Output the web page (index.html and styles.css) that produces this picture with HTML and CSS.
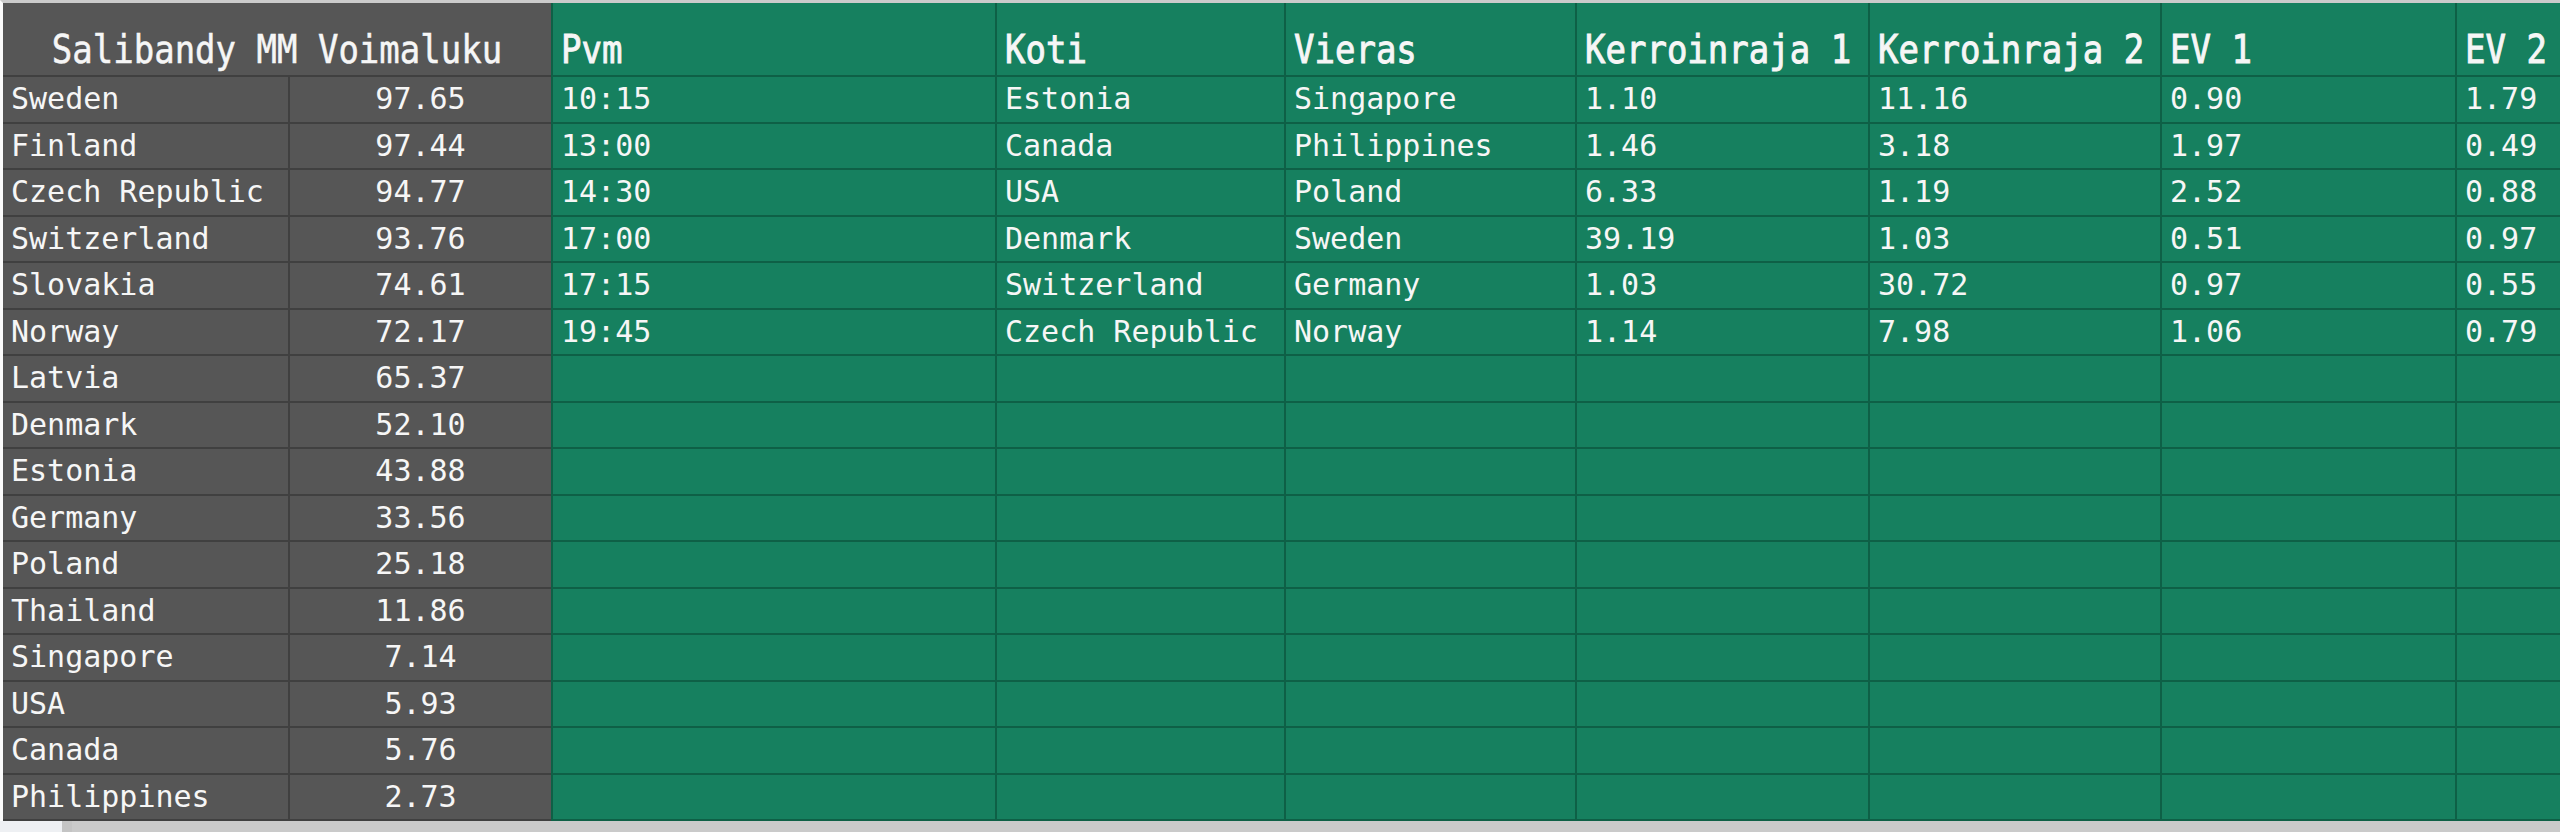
FILE: index.html
```html
<!DOCTYPE html>
<html lang="fi">
<head>
<meta charset="utf-8">
<title>Salibandy MM Voimaluku</title>
<link rel="stylesheet" href="styles.css">
</head>
<body>
<div class="sheet">
  <div class="cell grey head span2"><span class="ht">Salibandy MM Voimaluku</span></div>
  <div class="cell green head first"><span class="ht">Pvm</span></div>
  <div class="cell green head"><span class="ht">Koti</span></div>
  <div class="cell green head"><span class="ht">Vieras</span></div>
  <div class="cell green head"><span class="ht">Kerroinraja 1</span></div>
  <div class="cell green head"><span class="ht">Kerroinraja 2</span></div>
  <div class="cell green head"><span class="ht">EV 1</span></div>
  <div class="cell green head"><span class="ht">EV 2</span></div>

  <div class="cell grey name">Sweden</div><div class="cell grey val">97.65</div>
  <div class="cell green first">10:15</div><div class="cell green">Estonia</div><div class="cell green">Singapore</div><div class="cell green">1.10</div><div class="cell green">11.16</div><div class="cell green">0.90</div><div class="cell green">1.79</div>

  <div class="cell grey name">Finland</div><div class="cell grey val">97.44</div>
  <div class="cell green first">13:00</div><div class="cell green">Canada</div><div class="cell green">Philippines</div><div class="cell green">1.46</div><div class="cell green">3.18</div><div class="cell green">1.97</div><div class="cell green">0.49</div>

  <div class="cell grey name">Czech Republic</div><div class="cell grey val">94.77</div>
  <div class="cell green first">14:30</div><div class="cell green">USA</div><div class="cell green">Poland</div><div class="cell green">6.33</div><div class="cell green">1.19</div><div class="cell green">2.52</div><div class="cell green">0.88</div>

  <div class="cell grey name">Switzerland</div><div class="cell grey val">93.76</div>
  <div class="cell green first">17:00</div><div class="cell green">Denmark</div><div class="cell green">Sweden</div><div class="cell green">39.19</div><div class="cell green">1.03</div><div class="cell green">0.51</div><div class="cell green">0.97</div>

  <div class="cell grey name">Slovakia</div><div class="cell grey val">74.61</div>
  <div class="cell green first">17:15</div><div class="cell green">Switzerland</div><div class="cell green">Germany</div><div class="cell green">1.03</div><div class="cell green">30.72</div><div class="cell green">0.97</div><div class="cell green">0.55</div>

  <div class="cell grey name">Norway</div><div class="cell grey val">72.17</div>
  <div class="cell green first">19:45</div><div class="cell green">Czech Republic</div><div class="cell green">Norway</div><div class="cell green">1.14</div><div class="cell green">7.98</div><div class="cell green">1.06</div><div class="cell green">0.79</div>

  <div class="cell grey name">Latvia</div><div class="cell grey val">65.37</div>
  <div class="cell green first"></div><div class="cell green"></div><div class="cell green"></div><div class="cell green"></div><div class="cell green"></div><div class="cell green"></div><div class="cell green"></div>

  <div class="cell grey name">Denmark</div><div class="cell grey val">52.10</div>
  <div class="cell green first"></div><div class="cell green"></div><div class="cell green"></div><div class="cell green"></div><div class="cell green"></div><div class="cell green"></div><div class="cell green"></div>

  <div class="cell grey name">Estonia</div><div class="cell grey val">43.88</div>
  <div class="cell green first"></div><div class="cell green"></div><div class="cell green"></div><div class="cell green"></div><div class="cell green"></div><div class="cell green"></div><div class="cell green"></div>

  <div class="cell grey name">Germany</div><div class="cell grey val">33.56</div>
  <div class="cell green first"></div><div class="cell green"></div><div class="cell green"></div><div class="cell green"></div><div class="cell green"></div><div class="cell green"></div><div class="cell green"></div>

  <div class="cell grey name">Poland</div><div class="cell grey val">25.18</div>
  <div class="cell green first"></div><div class="cell green"></div><div class="cell green"></div><div class="cell green"></div><div class="cell green"></div><div class="cell green"></div><div class="cell green"></div>

  <div class="cell grey name">Thailand</div><div class="cell grey val">11.86</div>
  <div class="cell green first"></div><div class="cell green"></div><div class="cell green"></div><div class="cell green"></div><div class="cell green"></div><div class="cell green"></div><div class="cell green"></div>

  <div class="cell grey name">Singapore</div><div class="cell grey val">7.14</div>
  <div class="cell green first"></div><div class="cell green"></div><div class="cell green"></div><div class="cell green"></div><div class="cell green"></div><div class="cell green"></div><div class="cell green"></div>

  <div class="cell grey name">USA</div><div class="cell grey val">5.93</div>
  <div class="cell green first"></div><div class="cell green"></div><div class="cell green"></div><div class="cell green"></div><div class="cell green"></div><div class="cell green"></div><div class="cell green"></div>

  <div class="cell grey name">Canada</div><div class="cell grey val">5.76</div>
  <div class="cell green first"></div><div class="cell green"></div><div class="cell green"></div><div class="cell green"></div><div class="cell green"></div><div class="cell green"></div><div class="cell green"></div>

  <div class="cell grey name">Philippines</div><div class="cell grey val">2.73</div>
  <div class="cell green first"></div><div class="cell green"></div><div class="cell green"></div><div class="cell green"></div><div class="cell green"></div><div class="cell green"></div><div class="cell green"></div>
</div>
<div class="foot">
  <div class="foot-a"></div>
  <div class="foot-b"></div>
</div>
</body>
</html>
```

FILE: styles.css
```css
html, body {
  margin: 0;
  padding: 0;
}

body {
  width: 2560px;
  height: 832px;
  overflow: hidden;
  background: #c9c9c9;
  font-family: "DejaVu Sans Mono", "Liberation Mono", monospace;
  color: #f6f6f6;
}

.sheet {
  display: grid;
  grid-template-columns: 285px 263px 444px 289px 291px 293px 292px 295px 105px;
  grid-template-rows: 74px repeat(16, 46.5px);
  width: max-content;
  border-top: 3px solid #cbcbcb;
  border-left: 3px solid #fbfbfb;
}

.cell {
  box-sizing: border-box;
  border-bottom: 2px solid;
  border-left: 2px solid;
  padding-left: 8px;
  font-size: 30px;
  line-height: 44.5px;
  white-space: nowrap;
  overflow: hidden;
}

.grey {
  background: #565656;
  border-color: #404040;
}

.green {
  background: #16805f;
  border-color: #0e6046;
}

.name {
  border-left-width: 0;
}

.val {
  text-align: center;
  padding-left: 0;
}

.head {
  padding-top: 28px;
  line-height: 40px;
  font-size: 34px;
}

.span2 {
  grid-column: span 2;
  border-left-width: 0;
  text-align: center;
  padding-left: 0;
}

.ht {
  display: inline-block;
  transform: scaleY(1.15);
  transform-origin: 50% 79%;
  -webkit-text-stroke: 0.45px #f6f6f6;
}

.green.head .ht {
  -webkit-text-stroke: 0.8px #f6f6f6;
}

.foot {
  display: flex;
  height: 11px;
}

.foot-a {
  width: 62px;
  background: #eef0f3;
  border-right: 10px solid #c4c4c4;
}

.foot-b {
  flex: 1;
  background: #cacaca;
}
```
